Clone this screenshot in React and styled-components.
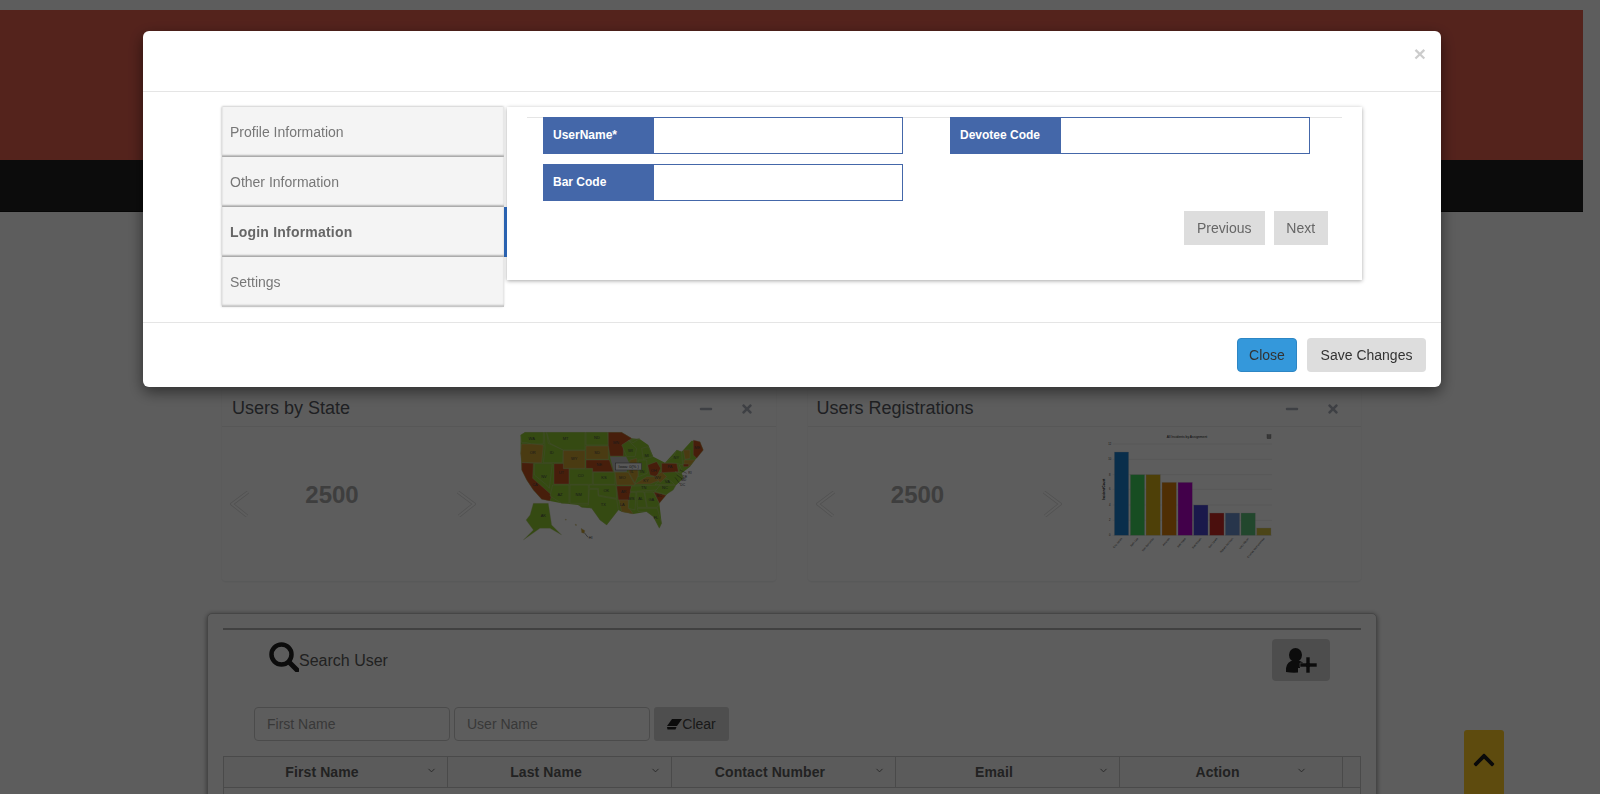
import React from "react";
import styled, { createGlobalStyle } from "styled-components";
import { FaChevronUp, FaMinus, FaTimes } from "react-icons/fa";
import { ChevronDown } from "lucide-react";

const GlobalStyle = createGlobalStyle`
    html, body {
        margin: 0;
        padding: 0;
        height: 100%;
        overflow: hidden;
        background: #fcfcfc;
        font-family: "Liberation Sans", Arial, sans-serif;
        font-size: 14px;
    }
    * { box-sizing: border-box; }
`;

const Page = styled.div`
    width: 1583px;
    height: 794px;
    padding-top: 10px;
    overflow: hidden;
`;

const Banner = styled.div`
    height: 150px;
    background: #e35f4e;
`;

const NavBar = styled.div`
    height: 52px;
    background: #232323;
    border-bottom: 1px solid #111;
`;

const CardsRow = styled.div`
    display: grid;
    grid-template-columns: 1fr 1fr;
    column-gap: 32px;
    margin: 178px 222px 0;
`;

const Card = styled.section`
    height: 192px;
    border-bottom: 1px solid #eef0f2;
    box-shadow: 0 0 0 1px #f6f6f6;
    border-radius: 0 0 4px 4px;
`;

const CardTitleBar = styled.div`
    display: flex;
    align-items: center;
    height: 37px;
    padding-left: ${(p) => p.$inset}px;
    border-bottom: 1px solid #ededed;
`;

const CardTitle = styled.h2`
    flex: 1;
    margin: 0;
    font-size: 18px;
    font-weight: 400;
    color: #55585f;
`;

const CardTool = styled.span`
    display: flex;
    justify-content: center;
    width: 41px;
    margin-top: 2px;
    color: #a9aeb9;
    font-size: 14px;
    &:last-child { margin-right: 8px; }
`;

const CardBody = styled.div`
    display: flex;
    height: 155px;
`;

const Slider = styled.div`
    display: flex;
    align-items: flex-start;
    width: 278px;
    padding: 65px 0 0 8px;
`;

const SliderValue = styled.div`
    width: 166px;
    margin: -15px 42px 0 0;
    text-align: center;
    font-size: 24px;
    font-weight: 700;
    line-height: 36px;
    color: #a8a8a8;
`;

const SliderArrow = styled.svg`
    width: 19px;
    height: 26px;
    margin-top: -1px;
    flex: none;
`;

const ChartBox = styled.div`
    margin-left: ${(p) => p.$offset || 0}px;
    margin-top: -7px;
    line-height: 0;
`;

const SearchPanel = styled.section`
    margin: 31px 206px 0 207px;
    height: 300px;
    padding: 15px;
    background: #fdfdfd;
    border: 1px solid #bdbdbd;
    border-radius: 5px;
    box-shadow: 0 1px 5px rgba(0, 0, 0, 0.45);
`;

const PanelRule = styled.div`
    height: 2px;
    margin-top: -1px;
    background: #b0b0b0;
    box-shadow: 0 4px 8px rgba(0, 0, 0, 0.05);
`;

const SearchHead = styled.div`
    display: flex;
    align-items: center;
    height: 42px;
    margin-top: 9px;
    padding: 0 31px 0 46px;
`;

const SearchIcon = styled.svg`
    width: 30px;
    height: 30px;
    flex: none;
    margin-top: -7px;
`;

const SearchTitle = styled.div`
    flex: 1;
    margin-top: 1px;
    font-size: 16px;
    color: #5a5a5a;
`;

const AddButton = styled.button`
    display: flex;
    align-items: center;
    justify-content: center;
    width: 58px;
    height: 42px;
    padding: 0;
    border: 0;
    border-radius: 4px;
    background: #d2d2d2;
`;

const FilterRow = styled.div`
    display: flex;
    gap: 4px;
    margin-top: 26px;
    padding-left: 31px;
`;

const FilterInput = styled.input`
    width: 196px;
    height: 34px;
    padding: 0 12px;
    border: 1px solid #ccc;
    border-radius: 4px;
    background: #fdfdfd;
    font: inherit;
    &::placeholder { color: #999; opacity: 1; }
`;

const ClearButton = styled.button`
    display: flex;
    align-items: center;
    justify-content: center;
    width: 75px;
    height: 34px;
    padding: 0;
    border: 0;
    border-radius: 3px;
    background: #d4d4d4;
    color: #444;
    font: inherit;
`;

const TableHead = styled.div`
    display: grid;
    grid-template-columns: 224px 224px 224px 224px 223px 1fr;
    height: 32px;
    margin-top: 15px;
    background: #f6f6f6;
    border: 1px solid #c8c8c8;
`;

const HeadCell = styled.div`
    display: flex;
    align-items: center;
    border-right: 1px solid #c8c8c8;
    color: #5c5c5c;
    font-weight: 700;
    letter-spacing: 0.1px;
    &:last-child { border-right: 0; }
`;

const HeadLabel = styled.span`
    flex: 1;
    padding-right: 6px;
    text-align: center;
`;

const HeadCaret = styled(ChevronDown)`
    margin: -4px 10px 0 0;
    color: #666;
    transform: translateX(${(p) => p.$shift || 0}px);
`;

const TableBody = styled.div`
    height: 40px;
    border: 1px solid #c8c8c8;
    border-top: 0;
`;

const ScrollTop = styled.button`
    position: fixed;
    left: 1464px;
    top: 730px;
    width: 40px;
    height: 90px;
    padding: 18px 0 0;
    display: flex;
    justify-content: center;
    align-items: flex-start;
    border: 0;
    border-radius: 3px;
    background: #ffcb28;
    color: #1c1c1c;
    font-size: 24px;
`;

const Backdrop = styled.div`
    position: fixed;
    inset: 0;
    background: rgba(0, 0, 0, 0.63);
`;

const Modal = styled.div`
    position: fixed;
    left: 143px;
    top: 31px;
    width: 1298px;
    background: #fff;
    border-radius: 6px;
    box-shadow: 0 5px 15px rgba(0, 0, 0, 0.5);
`;

const ModalHeader = styled.div`
    display: flex;
    justify-content: flex-end;
    height: 61px;
    padding: 10px 15px 0;
    border-bottom: 1px solid #e5e5e5;
`;

const CloseX = styled.span`
    font-size: 21px;
    font-weight: 700;
    line-height: 26px;
    color: #000;
    opacity: 0.2;
`;

const ModalBody = styled.div`
    display: flex;
    align-items: flex-start;
    height: 230px;
    padding: 15px 79px;
`;

const TabList = styled.div`
    width: 285px;
    flex: none;
`;

const Tab = styled.div`
    position: relative;
    display: flex;
    align-items: center;
    width: 282px;
    height: 50px;
    padding-left: 8px;
    background: #f4f4f4;
    color: ${(p) => (p.$active ? "#666" : "#777")};
    font-weight: ${(p) => (p.$active ? 700 : 400)};
    letter-spacing: ${(p) => (p.$active ? "0.2px" : "0")};
    box-shadow: 0 -1px 2px rgba(0, 0, 0, 0.15), -1px 0 2px rgba(0, 0, 0, 0.12), inset 0 -2px 2px rgba(0, 0, 0, 0.2);
    &::after {
        content: "";
        display: ${(p) => (p.$active ? "block" : "none")};
        position: absolute;
        top: 0;
        right: -3px;
        width: 3px;
        height: 100%;
        background: #2a62b0;
    }
`;

const FormPanel = styled.div`
    width: 856px;
    height: 173px;
    padding: 10px 20px;
    background: #fff;
    box-shadow: 0 1px 4px rgba(0, 0, 0, 0.35);
`;

const FormRule = styled.div`
    height: 1px;
    margin-bottom: -1px;
    background: #e5e5e5;
`;

const FieldGrid = styled.div`
    display: grid;
    grid-template-columns: 360px 360px;
    column-gap: 47px;
    row-gap: 10px;
    padding-left: 16px;
`;

const Field = styled.div`
    display: flex;
    height: 37px;
    border: 1px solid #4467a9;
`;

const FieldLabel = styled.label`
    display: flex;
    align-items: center;
    width: 110px;
    height: 100%;
    padding: 0 0 1px 9px;
    background: #4467a9;
    color: #fff;
    font-size: 12px;
    font-weight: 700;
`;

const FieldInput = styled.input`
    flex: 1;
    min-width: 0;
    border: 0;
    outline: 0;
    background: #fff;
`;

const PagerRow = styled.div`
    display: flex;
    justify-content: flex-end;
    gap: 9px;
    margin-top: 10px;
    padding-right: 14px;
`;

const PagerButton = styled.button`
    height: 34px;
    padding: 0;
    width: ${(p) => p.$width}px;
    border: 0;
    background: #ddd;
    color: #666;
    font: inherit;
`;

const ModalFooter = styled.div`
    display: flex;
    justify-content: flex-end;
    gap: 10px;
    height: 65px;
    padding: 15px;
    border-top: 1px solid #e5e5e5;
`;

const FooterButton = styled.button`
    height: 34px;
    width: ${(p) => p.$width}px;
    padding: 0;
    border: ${(p) => (p.$primary ? "1px solid #2d86c4" : "0")};
    border-radius: 4px;
    background: ${(p) => (p.$primary ? "#3498db" : "#ddd")};
    color: #333;
    font: inherit;
`;

const G = "#8fc832", O = "#c9a032", R = "#c2521f";

const US_OUTLINE = "62,45 75,37 325,37 365,37 395,55 420,58 445,75 460,110 495,128 530,90 545,95 575,62 600,65 610,90 585,120 570,140 545,160 550,175 528,196 498,226 478,250 485,310 478,325 460,290 440,275 400,282 365,275 355,270 320,315 300,300 275,265 245,262 235,255 185,250 150,243 125,238 100,210 80,180 65,150 62,100";

// simplified state outlines, in a 660x390 canvas
const STATES = [
    ["WA", G, "75,37 130,37 130,72 95,72 80,68 65,68 62,45", 95, 60],
    ["OR", O, "65,72 95,72 130,75 125,128 65,128 62,100", 98, 103],
    ["CA", R, "65,128 100,130 98,175 155,225 150,243 125,238 100,210 80,180 65,150", 105, 197],
    ["NV", G, "103,131 157,131 148,205 140,195 103,165", 132, 173],
    ["ID", G, "133,37 140,37 145,70 190,90 188,128 130,128 135,85", 155, 103],
    ["MT", G, "140,37 255,37 255,90 190,90 150,70", 197, 60],
    ["WY", O, "190,92 255,92 255,145 190,145", 223, 119],
    ["UT", R, "162,131 190,131 190,146 207,146 207,192 162,192", 184, 162],
    ["AZ", G, "158,195 207,195 207,250 185,250 150,228", 180, 227],
    ["NM", G, "210,195 265,195 265,250 210,250", 236, 227],
    ["CO", G, "208,147 277,147 277,193 208,193", 242, 170],
    ["ND", G, "258,37 322,37 325,75 258,75", 291, 58],
    ["SD", O, "258,78 325,78 325,118 258,118", 291, 101],
    ["NE", R, "258,120 328,120 340,155 278,155 278,145 258,145", 298, 137],
    ["KS", G, "280,157 345,157 345,193 280,193", 312, 176],
    ["OK", G, "268,195 348,195 350,235 320,230 295,225 295,205 268,205", 319, 215],
    ["TX", G, "268,208 293,208 295,228 350,238 355,270 320,315 300,300 275,265 245,262 235,255 265,255", 310, 258],
    ["MN", R, "325,37 365,37 395,55 370,75 370,108 330,108 325,75", 348, 73],
    ["", "#bdbdbd", "330,110 378,110 388,130 380,155 342,155", 0, 0],
    ["MO", O, "345,157 385,157 405,195 350,195", 367, 177],
    ["AR", R, "350,198 395,198 388,240 355,240", 371, 220],
    ["LA", O, "357,240 385,240 385,262 400,282 365,275", 367, 257],
    ["WI", G, "365,75 385,62 410,85 405,110 380,110 372,90", 391, 95],
    ["IL", O, "390,120 410,115 415,165 405,190 385,155", 396, 160],
    ["MI", G, "425,85 445,80 458,110 430,118", 440, 112],
    ["", G, "385,62 420,55 400,68", 0, 0],
    ["IN", G, "415,120 440,120 442,160 415,170", 427, 160],
    ["OH", R, "443,135 470,125 482,145 470,170 450,165", 461, 156],
    ["KY", O, "405,192 440,170 465,170 480,180 450,192", 438, 186],
    ["TN", G, "395,198 480,195 470,210 390,215", 431, 207],
    ["MS", G, "390,218 408,218 405,270 385,265", 394, 239],
    ["AL", G, "410,216 432,216 440,262 412,262", 422, 240],
    ["GA", G, "434,216 460,216 478,250 472,262 442,262", 454, 243],
    ["FL", G, "412,265 472,265 485,310 478,325 460,290 440,275 415,275", 468, 297],
    ["SC", R, "462,216 498,226 478,250", 477, 232],
    ["NC", G, "465,214 480,196 528,196 520,210 498,224", 495, 208],
    ["VA", G, "465,194 490,170 515,185 524,194", 502, 188],
    ["WV", O, "465,170 485,155 500,170 480,188", 473, 178],
    ["PA", R, "485,130 530,130 535,155 485,158", 510, 145],
    ["NY", G, "495,128 520,110 530,90 545,95 548,135 530,130", 529, 116],
    ["ME", R, "580,60 600,65 610,90 590,115 580,105", 592, 88],
    ["", O, "550,90 570,90 570,115 555,118", 0, 0],
    ["", O, "552,120 585,120 570,138 552,138", 0, 0],
    ["", R, "550,132 566,132 566,140 550,140", 0, 0],
    ["", G, "538,135 545,150 535,160", 0, 0],
    ["", G, "525,155 545,160 550,175", 0, 0],
    ["AK", G, "100,250 145,250 155,315 185,345 150,325 120,325 70,360 100,330 78,300 90,285", 130, 292],
    ["", O, "243,325 255,332 252,340 245,338", 0, 0],
    ["", O, "225,312 230,314 228,318", 0, 0],
    ["", O, "195,297 200,299 197,301", 0, 0],
];

const StateMap = () => (
    <svg width="220" height="130" viewBox="0 0 660 390">
        <polygon points={US_OUTLINE} fill={G} />
        {STATES.map(([name, fill, points, x, y], i) => (
            <g key={i}>
                <polygon points={points} fill={fill} stroke="#c8c8a8" strokeWidth="1" />
                {name && <text x={x} y={y} fontSize="12" textAnchor="middle" fontFamily="Liberation Sans" fill="#444">{name}</text>}
            </g>
        ))}
        <line x1="253" y1="338" x2="264" y2="352" stroke="#333" strokeWidth="1.5" />
        <text x="272" y="356" fontSize="11" textAnchor="middle" fontFamily="Liberation Sans" fill="#444">HI</text>
        <rect x="347" y="129" width="78" height="21" fill="#eee" stroke="#555" strokeWidth="1.5" />
        <text x="386" y="144" fontSize="12" textAnchor="middle" fontFamily="Liberation Sans" fill="#333">Iowa: 0(% )</text>
        <g stroke="#333" strokeWidth="1.2">
            <line x1="540" y1="150" x2="560" y2="160" />
            <line x1="530" y1="165" x2="545" y2="175" />
            <line x1="525" y1="172" x2="540" y2="192" />
        </g>
        <g fontSize="10" fontFamily="Liberation Sans" fill="#444">
            <text x="565" y="163">RI</text>
            <text x="548" y="173">DE</text>
            <text x="543" y="183">MD</text>
            <text x="541" y="198">DC</text>
        </g>
    </svg>
);

const BARS = [
    [70, 96, "#1a7ccb"], [118, 164, "#3fd05e"], [165, 164, "#d4ae18"], [213, 187, "#d67c0c"], [261, 187, "#b400ca"],
    [308, 255, "#4744cc"], [356, 279, "#c82a25"], [403, 279, "#6a90cc"], [450, 279, "#5cc07a"], [497, 324, "#cdba40"],
];
const BAR_NAMES = ["Eric Jones", "Beth Lee", "Dan Gonzalez", "Amanda", "Bob Hope", "Bob Brown", "Dan Lewis", "Robert Johnson", "Lucy Meyer", "Charles Bartholomew"];
const GRID = [[72, 12], [118, 10], [164, 8], [208, 6], [255, 4], [301, 2], [346, 0]];

const BarChart = () => (
    <svg width="200" height="140" viewBox="0 0 600 420" fontFamily="Liberation Sans">
        <text x="288" y="53" fontSize="10" textAnchor="middle" fill="#222">All Incidents by Assignment</text>
        <rect x="528" y="44" width="12" height="12" fill="#999" stroke="#555" />
        {GRID.map(([y, v]) => (
            <g key={v}>
                <line x1="65" x2="543" y1={y} y2={y} stroke="#ddd" strokeWidth="1.5" />
                <text x="56" y={y + 3} fontSize="8" textAnchor="middle" fill="#333">{v}</text>
            </g>
        ))}
        <text transform="translate(42 208) rotate(-90)" fontSize="9" fontWeight="700" textAnchor="middle" fill="#000">Incident Count</text>
        {BARS.map(([x, y, fill], i) => (
            <g key={i}>
                <rect x={x} y={y} width="43" height={346 - y} fill={fill} stroke="#ccc" />
                <text transform={`translate(${x + 24} 356) rotate(-50)`} fontSize="8" textAnchor="end" fill="#333">{BAR_NAMES[i]}</text>
            </g>
        ))}
    </svg>
);

const Arrow = ({ right }) => (
    <SliderArrow viewBox="0 0 19 26" fill="none">
        <g transform={right ? "translate(19 0) scale(-1 1)" : undefined}>
            <path d="M18 1 L2 13 L17 25" stroke="#dedede" strokeWidth="3.5" />
            <path d="M18 1 L2 13 L17 25" stroke="#fff" strokeWidth="1.8" />
        </g>
    </SliderArrow>
);

const StatCard = ({ title, inset, chartOffset, children }) => (
    <Card>
        <CardTitleBar $inset={inset}>
            <CardTitle>{title}</CardTitle>
            <CardTool><FaMinus /></CardTool>
            <CardTool><FaTimes /></CardTool>
        </CardTitleBar>
        <CardBody>
            <Slider>
                <Arrow />
                <SliderValue>2500</SliderValue>
                <Arrow right />
            </Slider>
            <ChartBox $offset={chartOffset}>{children}</ChartBox>
        </CardBody>
    </Card>
);

const COLUMNS = ["First Name", "Last Name", "Contact Number", "Email", "Action"];

const App = () => (
    <>
        <GlobalStyle />
        <Page>
            <Banner />
            <NavBar />
            <CardsRow>
                <StatCard title="Users by State" inset={10}><StateMap /></StatCard>
                <StatCard title="Users Registrations" inset={9} chartOffset={5}><BarChart /></StatCard>
            </CardsRow>
            <SearchPanel>
                <PanelRule />
                <SearchHead>
                    <SearchIcon viewBox="0 0 30 30" fill="none" stroke="#222">
                        <circle cx="12.5" cy="12.5" r="10" strokeWidth="4.5" />
                        <path d="M20 20 L28 28" strokeWidth="5" strokeLinecap="round" />
                    </SearchIcon>
                    <SearchTitle>Search User</SearchTitle>
                    <AddButton aria-label="Add user">
                        <svg width="32" height="25" viewBox="0 0 32 25" fill="#222">
                            <ellipse cx="10.500" cy="7" rx="6.500" ry="7" />
                            <path d="M6 13 L15 13 Q18 14 19 16 L15 16 L15 20 L13 20 L13 24.500 Q7 25 1 24 Q0 16 6 13 Z" />
                            <path d="M21 9 H25 V15 H32 V19 H25 V25 H21 V19 H15 V15 H21 Z" stroke="#d2d2d2" strokeWidth="0.6" />
                        </svg>
                    </AddButton>
                </SearchHead>
                <FilterRow>
                    <FilterInput placeholder="First Name" />
                    <FilterInput placeholder="User Name" />
                    <ClearButton>
                        <svg width="15" height="11" viewBox="0 0 15 11" fill="#222">
                            <path d="M5 0 H15 L10 7 H0 Z" />
                            <path d="M0 8 H9.500 L8.500 10.500 H0.500 Z" />
                        </svg>
                        Clear
                    </ClearButton>
                </FilterRow>
                <TableHead>
                    {COLUMNS.map((c) => (
                        <HeadCell key={c}>
                            <HeadLabel>{c}</HeadLabel>
                            <HeadCaret size={11} $shift={c === "Action" ? -25 : 0} />
                        </HeadCell>
                    ))}
                    <HeadCell />
                </TableHead>
                <TableBody />
            </SearchPanel>
            <ScrollTop aria-label="Back to top"><FaChevronUp /></ScrollTop>
        </Page>
        <Backdrop />
        <Modal>
            <ModalHeader><CloseX>×</CloseX></ModalHeader>
            <ModalBody>
                <TabList>
                    <Tab>Profile Information</Tab>
                    <Tab>Other Information</Tab>
                    <Tab $active>Login Information</Tab>
                    <Tab>Settings</Tab>
                </TabList>
                <FormPanel>
                    <FormRule />
                    <FieldGrid>
                        <Field><FieldLabel>UserName*</FieldLabel><FieldInput /></Field>
                        <Field><FieldLabel>Devotee Code</FieldLabel><FieldInput /></Field>
                        <Field><FieldLabel>Bar Code</FieldLabel><FieldInput /></Field>
                    </FieldGrid>
                    <PagerRow>
                        <PagerButton $width={80.5}>Previous</PagerButton>
                        <PagerButton $width={54.5}>Next</PagerButton>
                    </PagerRow>
                </FormPanel>
            </ModalBody>
            <ModalFooter>
                <FooterButton $primary $width={60}>Close</FooterButton>
                <FooterButton $width={119}>Save Changes</FooterButton>
            </ModalFooter>
        </Modal>
    </>
);

export default App;
